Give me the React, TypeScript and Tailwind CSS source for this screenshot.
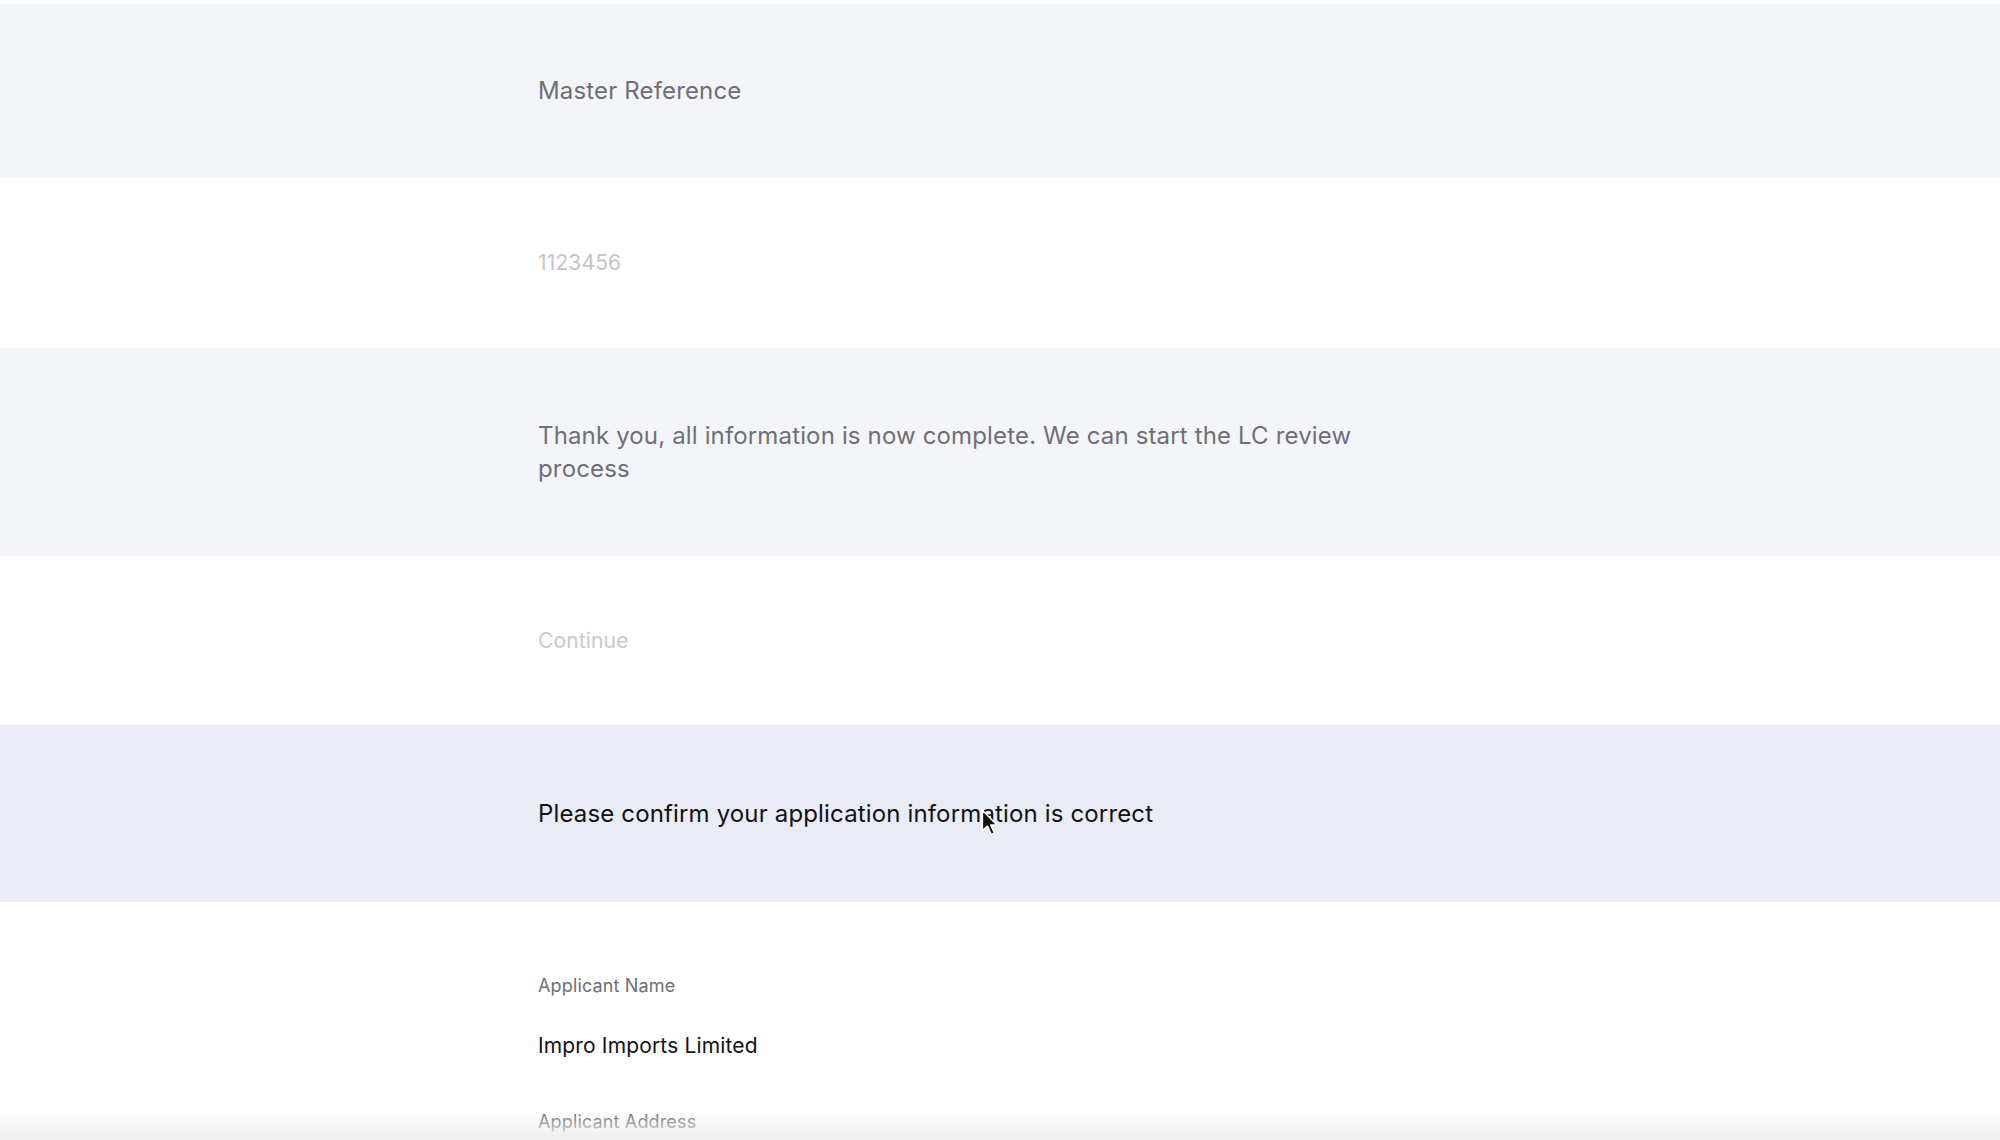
import React from "react";

export default function App() {
  return (
    <div
      className="relative w-full h-[1140px] overflow-hidden bg-white tracking-[0.15px]"
      style={{ fontFamily: "Inter, 'Noto Sans', sans-serif" }}
    >
      <div className="h-[4px] bg-[#fafbfc]" />
      <section className="h-[174px] bg-[#f4f5f9] flex items-center">
        <div className="mx-auto w-[924px]">
          <p className="text-[24px] leading-8 text-[#6e6f75]">Master Reference</p>
        </div>
      </section>
      <section className="h-[170px] bg-white flex items-center">
        <div className="mx-auto w-[924px]">
          <p className="text-[21px] leading-7 text-[#c4c5c9]">1123456</p>
        </div>
      </section>
      <section className="h-[208px] bg-[#f4f5f9] flex items-center">
        <div className="mx-auto w-[924px]">
          <p className="max-w-[860px] text-[24px] leading-[33px] text-[#6e6f75]">
            Thank you, all information is now complete. We can start the LC review process
          </p>
        </div>
      </section>
      <section className="h-[169px] bg-white flex items-center">
        <div className="mx-auto w-[924px]">
          <p className="text-[21px] leading-7 text-[#c8c9cc]">Continue</p>
        </div>
      </section>
      <section className="h-[177px] bg-[#e9ecf5] flex items-center">
        <div className="mx-auto w-[924px]">
          <p className="text-[24px] leading-8 text-[#111114]">
            Please confirm your application information is correct
          </p>
        </div>
      </section>
      <section className="bg-white">
        <div className="mx-auto w-[924px] pt-[72px] flex flex-col">
          <p className="text-[18px] leading-6 text-[#6e6f75]">Applicant Name</p>
          <p className="mt-[34px] text-[21px] leading-7 text-[#111114]">Impro Imports Limited</p>
          <p className="mt-[50px] text-[18px] leading-6 text-[#6e6f75]">Applicant Address</p>
        </div>
      </section>
      <div className="pointer-events-none absolute left-0 right-0 bottom-0 h-[28px] bg-gradient-to-b from-white/0 to-[#ededee]" />
      <svg
        className="absolute left-[981px] top-[809px]"
        width="18"
        height="28"
        viewBox="0 0 14 22"
      >
        <path d="M1 1 L1 17 L5 13.5 L8 20 L10.5 19 L7.6 12.6 L12.5 12.6 Z" fill="#111" stroke="#fff" strokeWidth="1.2" strokeLinejoin="round" />
      </svg>
    </div>
  );
}
